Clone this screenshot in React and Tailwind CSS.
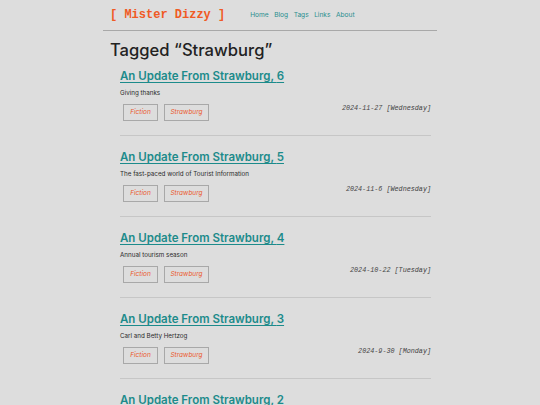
import React from "react";

const posts = [
  { n: 6, sub: "Giving thanks", date: "2024-11-27 [Wednesday]" },
  { n: 5, sub: "The fast-paced world of Tourist Information", date: "2024-11-6 [Wednesday]" },
  { n: 4, sub: "Annual tourism season", date: "2024-10-22 [Tuesday]" },
  { n: 3, sub: "Carl and Betty Hertzog", date: "2024-9-30 [Monday]" },
  { n: 2, sub: "", date: "" },
];

const sans = { fontFamily: "Inter, 'Noto Sans', sans-serif" };
const mono = { fontFamily: "'Liberation Mono', monospace" };

export default function App() {
  return (
    <div className="h-[405px] w-full bg-[#dddddd] overflow-hidden" style={sans}>
      <div className="mx-auto w-[334px]">
        <header className="flex items-center h-[31px] border-b border-[#a8a8a8] pl-[7px]">
          <div className="text-[12px] font-bold text-[#f05a24] whitespace-pre" style={mono}>[ Mister Dizzy ]</div>
          <nav className="flex gap-[5.5px] ml-[25px] mt-[2px] text-[6.6px] text-[#2a8f8f]">
            <span>Home</span>
            <span>Blog</span>
            <span>Tags</span>
            <span>Links</span>
            <span>About</span>
          </nav>
        </header>
        <h1 className="pl-[7px] mt-[9px] text-[16.6px] leading-[20px] font-medium text-[#222222]">Tagged “Strawburg”</h1>
        <div className="pl-[17px] pr-[6px]">
          {posts.map((p, i) => (
            <div key={p.n} className={i === 0 ? "border-b border-[#c6c6c6] pt-[9px] pb-[14px]" : "border-b border-[#c6c6c6] pt-[14px] pb-[14px]"}>
              <a className="block text-[11.5px] leading-[14px] font-semibold text-[#1c8b8b] underline underline-offset-[2px]">
                An Update From Strawburg, {p.n}
              </a>
              {p.sub && (
                <>
                  <p className="mt-[6px] text-[6.25px] leading-[8px] text-[#2a2a2a]">{p.sub}</p>
                  <div className="flex items-start justify-between mt-[7px]">
                    <div className="flex gap-[6px] pl-[3px]">
                      <span className="w-[35px] h-[17px] flex items-center justify-center border border-[#a8a8a8] text-[6.5px] italic text-[#ea5a30]">Fiction</span>
                      <span className="w-[45px] h-[17px] flex items-center justify-center border border-[#a8a8a8] text-[6.5px] italic text-[#ea5a30]">Strawburg</span>
                    </div>
                    <span className="text-[6.75px] leading-[8px] italic text-[#444444] whitespace-pre" style={mono}>{p.date}</span>
                  </div>
                </>
              )}
            </div>
          ))}
        </div>
      </div>
    </div>
  );
}
